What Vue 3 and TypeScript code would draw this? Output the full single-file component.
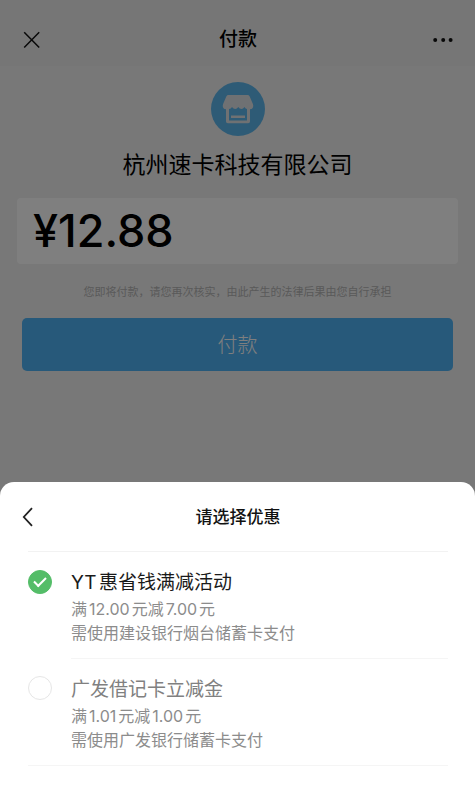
<script setup lang="ts">
import { ref } from 'vue'

interface Offer {
  id: string
  title: string
  discount: string
  condition: string
}

const offers: Offer[] = [
  { id: 'yt', title: 'YT惠省钱满减活动', discount: '满12.00元减7.00元', condition: '需使用建设银行烟台储蓄卡支付' },
  { id: 'gf', title: '广发借记卡立减金', discount: '满1.01元减1.00元', condition: '需使用广发银行储蓄卡支付' },
]

const selected = ref('yt')
</script>

<template>
  <div class="screen">
    <header class="nav">
      <button class="icon-btn" type="button" aria-label="关闭">
        <svg width="18" height="18" viewBox="0 0 18 18"><path d="M1.200 1.200 16.200 16.500M16.200 1.200 1.200 16.500" fill="none" stroke="#111" stroke-width="1.500" /></svg>
      </button>
      <h1 class="nav-title">付款</h1>
      <button class="icon-btn" type="button" aria-label="更多">
        <svg width="20" height="6" viewBox="0 0 20 6"><g fill="#111"><circle cx="2.2" cy="3" r="2" /><circle cx="10.2" cy="3" r="2" /><circle cx="17.6" cy="3" r="2" /></g></svg>
      </button>
    </header>

    <main class="pay">
      <svg class="shop" width="54" height="54" viewBox="0 0 54 54">
        <circle cx="27" cy="27" r="27" fill="#5cb6ec" />
        <path d="M17.500 13h19q1.500 0 2.200 1.400l3.200 7.500q1 2.400-.2 4-.9 1.200-2.700 1.300V39.500q0 1.800-1.800 1.800H16.800q-1.800 0-1.800-1.800V27.200q-1.800-.1-2.700-1.300-1.200-1.600-.2-4l3.200-7.500Q16 13 17.500 13Z" fill="#dfe3e6" />
        <path d="M18 27q2-.2 3-2 1.400 2 3.200 2t3.100-2q1.300 2 3.100 2t3.100-2q1 1.800 2.500 2V38.500H18Z" fill="#5cb6ec" />
        <path d="M20 33.500h14v2.500H20Z" fill="#dfe3e6" />
      </svg>
      <h2 class="merchant">杭州速卡科技有限公司</h2>
      <p class="amount">¥12.88</p>
      <p class="notice">您即将付款，请您再次核实，由此产生的法律后果由您自行承担</p>
      <button class="pay-btn" type="button">付款</button>
    </main>

    <div class="mask"></div>

    <section class="sheet" role="dialog" aria-labelledby="sheet-title">
      <header class="sheet-head">
        <button class="icon-btn" type="button" aria-label="返回">
          <svg width="12" height="20" viewBox="0 0 12 20"><path d="M10 1.200 1.800 10 10 18.800" fill="none" stroke="#222" stroke-width="1.800" /></svg>
        </button>
        <h2 id="sheet-title" class="sheet-title">请选择优惠</h2>
      </header>
      <div class="offers">
        <label v-for="offer in offers" :key="offer.id" class="offer" :class="{ chosen: selected === offer.id }">
          <input v-model="selected" class="radio" type="radio" name="offer" :value="offer.id" />
          <span class="offer-body">
            <span class="offer-title">{{ offer.title }}</span>
            <span class="offer-text">{{ offer.discount }}</span>
            <span class="offer-text">{{ offer.condition }}</span>
          </span>
        </label>
      </div>
    </section>
  </div>
</template>

<style>
body {
  margin: 0;
}
</style>

<style scoped>
.screen {
  min-height: 100vh;
  background: #f0f0f0;
  color: #000;
  font-family: Inter, "Noto Sans CJK SC", sans-serif;
}

h1,
h2,
p {
  margin: 0;
}

button {
  border: 0;
  padding: 0;
  font-family: inherit;
}

.icon-btn {
  display: flex;
  background: none;
}

.nav {
  display: grid;
  grid-template-columns: 1fr auto 1fr;
  align-items: center;
  padding: 27px 22px 13px 23px;
  background: #ededed;
}

.nav .icon-btn:last-child {
  justify-self: end;
}

.nav-title {
  font-size: 19px;
  line-height: 26px;
  font-weight: 500;
}

.pay {
  display: flex;
  flex-direction: column;
  align-items: center;
  padding: 16px 17px 0;
}

.merchant {
  margin-top: 14px;
  font-size: 23px;
  line-height: 30px;
  font-weight: 400;
}

.amount {
  box-sizing: border-box;
  width: 100%;
  margin-top: 18px;
  padding: 0 16px;
  border-radius: 4px;
  background: #fff;
  font-size: 45px;
  line-height: 66px;
  font-weight: 500;
}

.notice {
  margin-top: 20px;
  font-size: 11px;
  line-height: 16px;
  color: #b4b4b4;
}

.pay-btn {
  align-self: stretch;
  margin: 18px 5px 0;
  padding-top: 1px;
  border-radius: 5px;
  background: #4eb2f4;
  color: #fff;
  font-size: 20px;
  line-height: 52px;
  font-weight: 300;
}

.mask {
  position: fixed;
  inset: 0;
  background: rgba(0, 0, 0, 0.5);
}

.sheet {
  position: fixed;
  right: 0;
  bottom: 0;
  left: 0;
  box-sizing: border-box;
  padding: 0 27px 34px 28px;
  border-radius: 14px 14px 0 0;
  background: #fff;
}

.sheet-head {
  display: grid;
  grid-template-columns: 1fr auto 1fr;
  align-items: center;
  height: 69px;
}

.sheet-head .icon-btn {
  margin-left: -6px;
}

.sheet-title {
  font-size: 17px;
  line-height: 24px;
  font-weight: 500;
  color: #111;
}

.offers {
  border-top: 1px solid #f2f2f2;
  border-bottom: 1px solid #f5f5f5;
}

.offer {
  display: flex;
  gap: 19px;
  color: #808080;
  text-autospace: normal;
}

.radio {
  appearance: none;
  box-sizing: border-box;
  display: grid;
  place-items: center;
  flex: none;
  width: 24px;
  height: 24px;
  margin: 18px 0 0;
  border: 1px solid #e6e6e6;
  border-radius: 50%;
}

.radio:checked {
  border-color: #54bd68;
  background: #54bd68;
}

.radio:checked::after {
  content: "";
  box-sizing: border-box;
  width: 12px;
  height: 7px;
  margin-bottom: 3px;
  border: solid #fff;
  border-width: 0 0 2px 2px;
  transform: rotate(-45deg);
}

.offer-body {
  display: flex;
  flex: 1;
  flex-direction: column;
  padding: 17px 0 13px;
}

.offer + .offer .offer-body {
  border-top: 1px solid #f5f5f5;
}

.offer-title {
  font-size: 19px;
  line-height: 28px;
}

.chosen .offer-title {
  color: #1a1a1a;
}

.offer-text {
  font-size: 16px;
  line-height: 24px;
  color: #8c8c8c;
}
</style>
